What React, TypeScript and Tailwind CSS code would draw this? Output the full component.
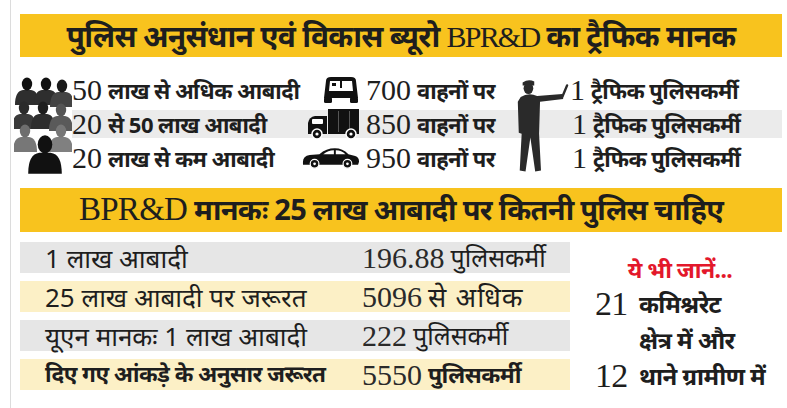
import React from "react";

const hindi = "font-['Noto_Sans','Noto_Sans_Devanagari','Lohit_Devanagari',sans-serif]";
const serif = "font-['Liberation_Serif',serif]";
const rowStart = ["row-start-1", "row-start-2", "row-start-3"];

function Person({ cx, cy, s = 1, head, body }: { cx: number; cy: number; s?: number; head: string; body: string }) {
  return (
    <g transform={`translate(${cx} ${cy}) scale(${s})`}>
      <path d="M-12 22 Q-12 8 -4 7 L4 7 Q12 8 12 22 Z" fill={body} />
      <ellipse cx="0" cy="1" rx="5.2" ry="6.5" fill={head} />
    </g>
  );
}

function People() {
  return (
    <svg width="58" height="100" viewBox="0 0 58 100">
      <Person cx={13} cy={8} head="#111" body="#2e2e2e" />
      <Person cx={32} cy={8} head="#111" body="#2e2e2e" />
      <Person cx={48} cy={10} head="#1a1a1a" body="#444" />
      <Person cx={10} cy={32} head="#2a2a2a" body="#3a3a3a" />
      <Person cx={29} cy={32} head="#1e1e1e" body="#2e2e2e" />
      <Person cx={47} cy={34} head="#555" body="#5a5a5a" />
      <Person cx={11} cy={55} head="#6e6e6e" body="#777" />
      <Person cx={47} cy={55} head="#777" body="#808080" />
      <Person cx={31} cy={68} s={1.4} head="#111" body="#111" />
    </svg>
  );
}

function Rickshaw() {
  return (
    <svg width="38" height="28" viewBox="0 0 38 28">
      <path d="M4 5 Q4 1 9 1 L29 1 Q34 1 34 5 L36 22 L2 22 Z" fill="#111" />
      <path d="M8 5 L30 5 L31 15 L7 15 Z" fill="#fff" />
      <rect x="18" y="5" width="2" height="7" fill="#111" />
      <rect x="10" y="7" width="4" height="3" fill="#111" />
      <rect x="2" y="21" width="8" height="6" rx="1.5" fill="#111" />
      <rect x="28" y="21" width="8" height="6" rx="1.5" fill="#111" />
    </svg>
  );
}

function Truck() {
  return (
    <svg width="54" height="32" viewBox="0 0 54 32">
      <path d="M2 26 L2 15 Q3 9 9 8 L21 8 L21 26 Z" fill="#111" />
      <rect x="6" y="11" width="11" height="5" rx="1" fill="#fff" />
      <rect x="22" y="1" width="31" height="25" fill="#111" />
      <rect x="32" y="3" width="1" height="21" fill="#555" />
      <rect x="43" y="3" width="1" height="21" fill="#555" />
      <circle cx="11" cy="26" r="5" fill="#111" stroke="#fff" strokeWidth="1.5" />
      <circle cx="45" cy="26" r="5" fill="#111" stroke="#fff" strokeWidth="1.5" />
      <circle cx="11" cy="26" r="1.6" fill="#fff" />
      <circle cx="45" cy="26" r="1.6" fill="#fff" />
    </svg>
  );
}

function Car() {
  return (
    <svg width="60" height="24" viewBox="0 0 60 24">
      <path d="M1 16 Q1 10 8 9 L18 8 Q25 2 34 2 Q42 2 48 8 L55 10 Q59 11 59 16 L58 19 L1 19 Z" fill="#111" />
      <path d="M22 8 Q27 4 33 4 L33 8 Z" fill="#fff" />
      <path d="M35 4 Q41 4 45 8 L35 8 Z" fill="#fff" />
      <circle cx="13" cy="18" r="4.5" fill="#111" stroke="#fff" strokeWidth="1.2" />
      <circle cx="47" cy="18" r="4.5" fill="#111" stroke="#fff" strokeWidth="1.2" />
      <circle cx="13" cy="18" r="1.4" fill="#fff" />
      <circle cx="47" cy="18" r="1.4" fill="#fff" />
    </svg>
  );
}

function Policeman() {
  return (
    <svg width="60" height="100" viewBox="0 0 60 100">
      <path d="M11 5 Q17 1 23 4 L23 8 L11 8 Z" fill="#2a2a2a" />
      <ellipse cx="17" cy="11" rx="5" ry="6" fill="#2a2a2a" />
      <path
        d="M9 20 Q17 15 26 19 L52 17 L53 22 L29 25 L28 58 L30 96 L24 97 L19 62 L14 97 L8 96 L10 58 L7 57 L6 25 Z"
        fill="#2a2a2a"
      />
      <path d="M52 20 L57 8" stroke="#2a2a2a" strokeWidth="2.5" strokeLinecap="round" />
    </svg>
  );
}

const topRows = [
  { pop: "50", popText: "लाख से अधिक आबादी", icon: <Rickshaw />, veh: "700" },
  { pop: "20", popText: "से 50 लाख आबादी", icon: <Truck />, veh: "850" },
  { pop: "20", popText: "लाख से कम आबादी", icon: <Car />, veh: "950" },
];

const tableRows = [
  { label: "1 लाख आबादी", value: "196.88", unit: "पुलिसकर्मी", bg: "bg-[#e6e6e6]", unitCls: "text-[25px]" },
  { label: "25 लाख आबादी पर जरूरत", value: "5096", unit: "से अधिक", bg: "bg-[#fcf0c6]", unitCls: "text-[27px] tracking-[0.04em]" },
  { label: "यूएन मानकः 1 लाख आबादी", value: "222", unit: "पुलिसकर्मी", bg: "bg-[#e6e6e6]", unitCls: "text-[25px]" },
  { label: "दिए गए आंकड़े के अनुसार जरूरत", value: "5550", unit: "पुलिसकर्मी", bg: "bg-[#fcf0c6]", unitCls: "text-[23px] tracking-tight" },
];

export default function App() {
  return (
    <div className={`w-[787px] h-[408px] bg-white overflow-hidden text-[#1e1e1e] ${hindi}`}>
      <div className="ml-[10px] h-full border-l border-[#dcdcdc] pl-[9px] pr-[5px] pt-[14px]">
        {/* heading */}
        <div className="h-[43px] bg-[#f8c31e] flex items-center justify-center text-[30px] font-bold tracking-tight">
          <span>
            पुलिस अनुसंधान एवं विकास ब्यूरो{" "}
            <span className={`${serif} font-normal text-[30px] tracking-[-0.06em]`}>BPR&amp;D</span> का ट्रैफिक मानक
          </span>
        </div>

        {/* traffic norms */}
        <div className="mt-[16px] -ml-[6px] grid grid-cols-[58px_230px_58px_152px_58px_1fr] grid-rows-[34px_34px_34px]">
          <div className="col-start-2 col-end-7 row-start-2 my-[3px] bg-[#ebebeb]" />
          <div className="col-start-1 row-start-1 row-span-3 flex items-start pt-[2px]">
            <People />
          </div>
          {topRows.map((r, i) => (
            <React.Fragment key={i}>
              <div className={`col-start-2 flex items-center gap-[6px] text-[22px] font-bold ${rowStart[i]}`}>
                <span className={`${serif} font-normal text-[30px] leading-none`}>{r.pop}</span>
                <span className="tracking-tight">{r.popText}</span>
              </div>
              <div className={`col-start-3 flex items-center justify-end ${rowStart[i]}`}>{r.icon}</div>
              <div className={`col-start-4 flex items-center gap-[6px] pl-[6px] text-[22px] font-bold ${rowStart[i]}`}>
                <span className={`${serif} font-normal text-[30px] leading-none`}>{r.veh}</span>
                <span className="tracking-tight">वाहनों पर</span>
              </div>
              <div className={`col-start-6 flex items-center gap-[6px] text-[22px] font-bold ${rowStart[i]} ${i === 0 ? "pl-0" : "pl-[2px]"}`}>
                <span className={`${serif} font-normal text-[30px] leading-none`}>1</span>
                <span className="tracking-tight">ट्रैफिक पुलिसकर्मी</span>
              </div>
            </React.Fragment>
          ))}
          <div className="col-start-5 row-start-1 row-span-3 flex items-start pt-[3px]">
            <Policeman />
          </div>
        </div>

        {/* BPR&D standard */}
        <div className="mt-[13px] h-[44px] bg-[#f8c31e] flex items-center justify-center text-[29px] font-bold tracking-tight">
          <span>
            <span className={`${serif} font-normal text-[33px]`}>BPR&amp;D</span> मानकः 25 लाख आबादी पर कितनी पुलिस चाहिए
          </span>
        </div>

        <div className="mt-[10px] flex">
          <div className="w-[550px] flex flex-col gap-[8px]">
            {tableRows.map((r, i) => (
              <div
                key={i}
                className={`h-[31px] grid grid-cols-[342px_1fr] items-center ${r.bg} ${i === 3 ? "font-bold text-[22.5px]" : "font-normal text-[26px]"}`}
              >
                <span className={`pl-[25px] leading-none ${i === 3 ? "tracking-tight" : ""}`}>{r.label}</span>
                <span className="flex items-center gap-[6px]">
                  <span className={`${serif} text-[30px] leading-none font-normal text-[#2a2a2a]`}>{r.value}</span>
                  <span className={`leading-none ${r.unitCls}`}>{r.unit}</span>
                </span>
              </div>
            ))}
          </div>
          <div className="flex-1 flex flex-col items-center pt-[11px] pl-[8px]">
            <div className="text-[#e3182b] text-[23px] font-bold leading-[33px] tracking-tight">ये भी जानें...</div>
            <div className="grid grid-cols-[42px_auto] grid-rows-[36px_36px_36px] items-center gap-x-[2px] font-bold text-[24px] tracking-tight">
              <span className={`${serif} font-normal text-[34px] leading-none`}>21</span>
              <span className="leading-none">कमिश्नरेट</span>
              <span />
              <span className="leading-none">क्षेत्र में और</span>
              <span className={`${serif} font-normal text-[34px] leading-none`}>12</span>
              <span className="leading-none">थाने ग्रामीण में</span>
            </div>
          </div>
        </div>
      </div>
    </div>
  );
}
